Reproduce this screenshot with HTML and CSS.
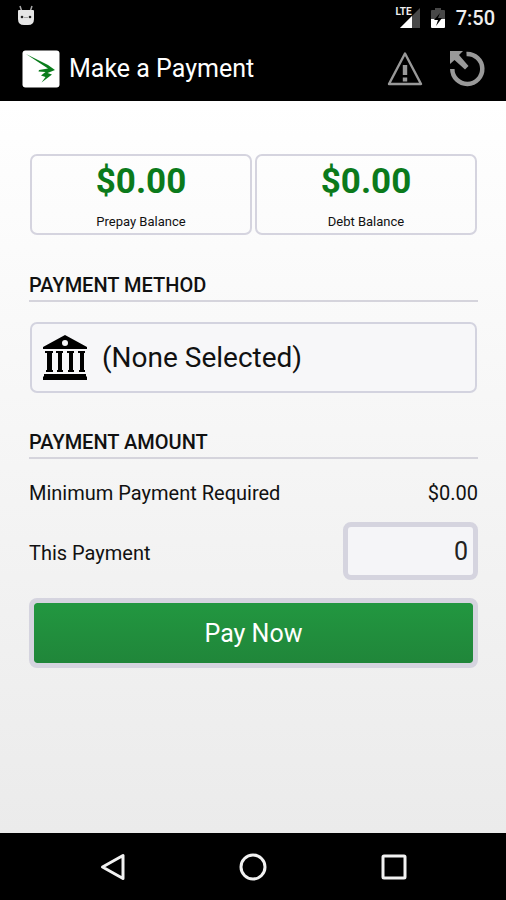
FILE: index.html
```html
<!DOCTYPE html>
<html lang="en">
<head>
<meta charset="utf-8">
<meta name="viewport" content="width=device-width, initial-scale=1">
<title>Make a Payment</title>
<link rel="stylesheet" href="styles.css">
</head>
<body>
<div class="status">
  <svg class="status-droid" width="20" height="22" viewBox="0 0 20 22" aria-hidden="true">
    <path d="M4 1l2 6M16 1l-2 6" stroke="#aaa" stroke-width="1.500"/>
    <path d="M2 6q0-1 1-1h14q1 0 1 1v8q0 6-6 6H8q-6 0-6-6z" fill="#e6e6e6"/>
    <circle cx="6" cy="12" r="1.300" fill="#222"/><circle cx="14" cy="12" r="1.300" fill="#222"/>
    <path d="M8 12.500h4" stroke="#aaa"/>
  </svg>
  <div class="status-right">
    <div class="signal">
      <svg width="22" height="22" viewBox="0 0 22 22" aria-hidden="true">
        <path d="M22 1v20H2z" fill="#484848"/>
        <path d="M14 9v12H2z" fill="#fff"/>
      </svg>
      <span class="lte">LTE</span>
    </div>
    <svg width="16" height="22" viewBox="0 0 16 22" aria-hidden="true">
      <path d="M5 1h6v2h3q1 0 1 1v8H1V4q0-1 1-1h3z" fill="#484848"/>
      <path d="M1 12h14v8q0 1-1 1H2q-1 0-1-1z" fill="#fff"/>
      <path d="M10 6l-6 7h4l-2 6 6-8H8z" fill="#000"/>
    </svg>
    <span class="clock">7:50</span>
  </div>
</div>
<header class="appbar">
  <svg class="logo" width="38" height="38" viewBox="0 0 38 38" aria-hidden="true">
    <rect x="0.500" y="0.500" width="37" height="37" rx="3" fill="#fff"/>
    <path d="M4 4L26 15L33 20L25.500 23L30 24.500L19.500 32.500L23.500 27L19 25.500L23.500 22L16.500 21.500L17 20L26 18.500Z" fill="#0a7d1c"/>
  </svg>
  <h1>Make a Payment</h1>
  <div class="actions">
    <button class="icon-button" type="button" aria-label="Alerts">
      <svg width="36" height="36" viewBox="0 0 36 36" aria-hidden="true">
        <path d="M18 2.500L34 33H2z" fill="none" stroke="#999" stroke-width="2.400" stroke-linejoin="round"/>
        <path d="M15.800 14h4.400v10h-4.400zM15.800 26.500h4.400v4h-4.400z" fill="#999"/>
      </svg>
    </button>
    <button class="icon-button" type="button" aria-label="Refresh">
      <svg width="36" height="36" viewBox="0 0 36 36" aria-hidden="true">
        <path d="M17.500 3A15 15 0 1 1 3.300 18" fill="none" stroke="#999" stroke-width="4.500"/>
        <path d="M1 0h13l-4 4 9.500 11-3.500 3.500L5.500 9 1 13z" fill="#999"/>
      </svg>
    </button>
  </div>
</header>
<main>
  <div class="balances">
    <div class="balance"><strong>$0.00</strong><span>Prepay Balance</span></div>
    <div class="balance"><strong>$0.00</strong><span>Debt Balance</span></div>
  </div>
  <h2>PAYMENT METHOD</h2>
  <button class="method" type="button">
    <svg width="46" height="46" viewBox="0 0 46 46" aria-hidden="true">
      <path fill-rule="evenodd" d="M23 0L45 12v2H1v-2zM23 5a3 3 0 1 0 0 6 3 3 0 0 0 0-6z"/>
      <path d="M3 16h8v2h-1v17h1v2H4v-2h1V18H3zM14 16h7v2h-1v17h1v2h-6v-2h1V18h-2zM25 16h7v2h-1v17h1v2h-6v-2h1V18h-2zM36 16h7v2h-1v17h1v2h-6v-2h1V18h-2zM2 39h42v2l1 1v3H1v-3l1-1z"/>
    </svg>
    <span>(None Selected)</span>
  </button>
  <h2>PAYMENT AMOUNT</h2>
  <div class="row minimum"><span>Minimum Payment Required</span><span>$0.00</span></div>
  <div class="row amount"><label for="amount">This Payment</label><input id="amount" type="text" inputmode="decimal" value="0"></div>
  <button class="pay" type="button">Pay Now</button>
</main>
<nav>
  <button class="nav-button" type="button" aria-label="Back">
    <svg width="28" height="28" viewBox="0 0 28 28" aria-hidden="true"><path d="M25 2.500v23L4.500 14z"/></svg>
  </button>
  <button class="nav-button" type="button" aria-label="Home">
    <svg width="28" height="28" viewBox="0 0 28 28" aria-hidden="true"><circle cx="14" cy="14" r="12"/></svg>
  </button>
  <button class="nav-button" type="button" aria-label="Recent apps">
    <svg width="28" height="28" viewBox="0 0 28 28" aria-hidden="true"><rect x="3" y="3" width="22" height="22" rx="1"/></svg>
  </button>
</nav>
</body>
</html>
```
FILE: styles.css
```css
* {
  box-sizing: border-box;
}

body {
  margin: 0;
  min-height: 100vh;
  display: flex;
  flex-direction: column;
  background: #000;
  color: #111;
  font-family: Roboto, "Liberation Sans", sans-serif;
}

button {
  font: inherit;
  color: inherit;
  cursor: pointer;
}

svg {
  display: block;
  flex: none;
}

h1,
h2 {
  margin: 0;
}

.status {
  display: flex;
  justify-content: space-between;
  align-items: center;
  height: 36px;
  padding: 0 11px 0 16px;
  color: #eee;
}

.status-droid {
  margin-bottom: 4px;
}

.status-right {
  display: flex;
  align-items: center;
  gap: 10px;
}

.signal {
  position: relative;
}

.lte {
  position: absolute;
  top: 0;
  right: 8px;
  font-size: 10px;
  font-weight: 700;
  line-height: 10px;
}

.clock {
  font-size: 20px;
  font-weight: 500;
  line-height: 24px;
}

.appbar {
  display: flex;
  align-items: center;
  height: 65px;
  padding: 0 21px 0 22px;
  gap: 9px;
  color: #fff;
}

.appbar h1 {
  flex: 1;
  font-size: 25px;
  font-weight: 400;
  line-height: 32px;
}

.actions {
  display: flex;
  gap: 26px;
}

.icon-button,
.nav-button {
  padding: 0;
  border: 0;
  background: none;
}

main {
  flex: 1;
  display: flex;
  flex-direction: column;
  padding: 53px 28px 32px 29px;
  background: linear-gradient(#fff, #ebebeb);
}

.balances {
  display: flex;
  gap: 3px;
  padding: 0 1px;
  margin-bottom: 38px;
}

.balance {
  flex: 1;
  display: flex;
  flex-direction: column;
  align-items: center;
  gap: 11px;
  padding: 5px 0 3px;
  border: 2px solid #d5d4df;
  border-radius: 7px;
}

.balance strong {
  color: #0b7a1b;
  font-size: 35px;
  line-height: 42px;
}

.balance span {
  font-size: 13px;
  line-height: 16px;
}

h2 {
  padding-bottom: 3px;
  border-bottom: 2px solid #d5d4dc;
  font-size: 20px;
  font-weight: 500;
  line-height: 24px;
}

.method {
  display: flex;
  align-items: center;
  gap: 14px;
  height: 71px;
  margin: 20px 1px 37px;
  padding: 0 10px;
  border: 2px solid #d3d3df;
  border-radius: 7px;
  background: #f7f7f9;
  font-size: 28px;
}

.row {
  display: flex;
  justify-content: space-between;
  align-items: center;
  font-size: 20px;
  line-height: 24px;
}

.minimum {
  margin-top: 22px;
}

.amount {
  margin: 17px 0 18px;
}

.amount label {
  padding-top: 4px;
}

.amount input {
  width: 30%;
  height: 58px;
  padding: 0 5px;
  border: 5px solid #d5d4df;
  border-radius: 8px;
  background: #f5f5f8;
  color: #222;
  font: inherit;
  font-size: 25px;
  text-align: right;
}

.pay {
  height: 70px;
  border: 5px solid #d5d4df;
  border-radius: 8px;
  background: linear-gradient(#229740, #20863a) padding-box;
  color: #fff;
  font-size: 25px;
}

nav {
  display: flex;
  justify-content: center;
  align-items: center;
  gap: 113px;
  height: 67px;
}

.nav-button svg {
  fill: none;
  stroke: #f2f2f2;
  stroke-width: 3;
  stroke-linejoin: round;
}
```
